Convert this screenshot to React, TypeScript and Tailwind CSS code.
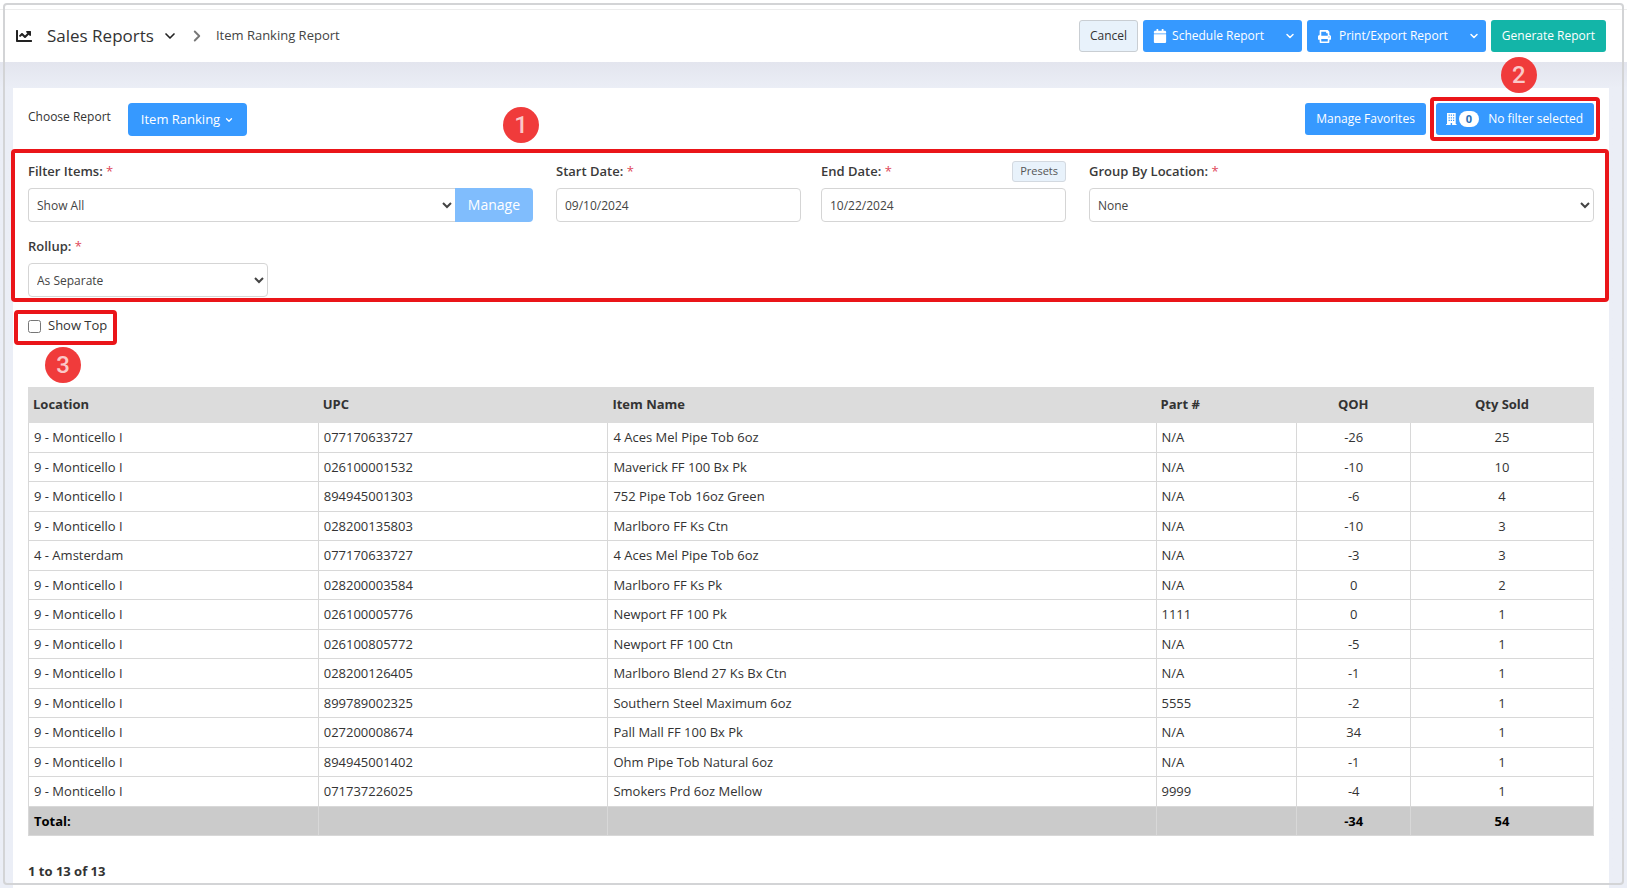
import type { ReactNode } from "react";
import { FaCalendar, FaChartLine, FaPrint } from "react-icons/fa";
import { LuChevronDown, LuChevronRight } from "react-icons/lu";

type Row = [string, string, string, string, string, string];

const rows: Row[] = [
  ["9 - Monticello I", "077170633727", "4 Aces Mel Pipe Tob 6oz", "N/A", "-26", "25"],
  ["9 - Monticello I", "026100001532", "Maverick FF 100 Bx Pk", "N/A", "-10", "10"],
  ["9 - Monticello I", "894945001303", "752 Pipe Tob 16oz Green", "N/A", "-6", "4"],
  ["9 - Monticello I", "028200135803", "Marlboro FF Ks Ctn", "N/A", "-10", "3"],
  ["4 - Amsterdam", "077170633727", "4 Aces Mel Pipe Tob 6oz", "N/A", "-3", "3"],
  ["9 - Monticello I", "028200003584", "Marlboro FF Ks Pk", "N/A", "0", "2"],
  ["9 - Monticello I", "026100005776", "Newport FF 100 Pk", "1111", "0", "1"],
  ["9 - Monticello I", "026100805772", "Newport FF 100 Ctn", "N/A", "-5", "1"],
  ["9 - Monticello I", "028200126405", "Marlboro Blend 27 Ks Bx Ctn", "N/A", "-1", "1"],
  ["9 - Monticello I", "899789002325", "Southern Steel Maximum 6oz", "5555", "-2", "1"],
  ["9 - Monticello I", "027200008674", "Pall Mall FF 100 Bx Pk", "N/A", "34", "1"],
  ["9 - Monticello I", "894945001402", "Ohm Pipe Tob Natural 6oz", "N/A", "-1", "1"],
  ["9 - Monticello I", "071737226025", "Smokers Prd 6oz Mellow", "9999", "-4", "1"],
];

const headings = ["Location", "UPC", "Item Name", "Part #", "QOH", "Qty Sold"];
const control = "h-[34px] w-full rounded border border-[#d5d5d5] bg-white text-[12px] text-[#444]";
const blue = "bg-[#3699ff] text-white";

function Marker({ n, className }: { n: number; className: string }) {
  return (
    <span
      className={`absolute z-10 flex size-9 items-center justify-center rounded-full bg-[#f03b3b] font-['Roboto',sans-serif] text-2xl font-medium text-[#fbc8c8] ${className}`}
    >
      {n}
    </span>
  );
}

function Outline({ className }: { className: string }) {
  return (
    <span
      className={`pointer-events-none absolute rounded-[4px] border-4 border-[#ea1519] ${className}`}
    />
  );
}

function Label({ htmlFor, children }: { htmlFor: string; children: ReactNode }) {
  return (
    <label htmlFor={htmlFor} className="text-[13px] leading-5 font-semibold text-[#3a3a3a]">
      {children} <span className="font-normal text-[#e0485a]">*</span>
    </label>
  );
}

function SplitButton({ icon, children }: { icon: ReactNode; children: string }) {
  return (
    <div className="flex">
      <button className={`flex h-8 items-center rounded-l-[3px] px-[10px] ${blue}`}>
        {icon}
        {children}
      </button>
      <button
        aria-label={`${children} options`}
        className={`flex h-8 items-center rounded-r-[3px] pr-[6px] pl-[10px] ${blue}`}
      >
        <LuChevronDown className="size-3" strokeWidth={3} />
      </button>
    </div>
  );
}

export default function App() {
  return (
    <div className="relative flex min-h-screen flex-col bg-[#ebedf5] font-['Open_Sans',sans-serif] text-[13px] text-[#333]">
      <div className="pointer-events-none absolute inset-x-[3px] top-[3px] bottom-[3px] z-20 rounded border-2 border-[#d3d4d6]" />

      <div className="h-[9px] bg-white" />
      <header className="flex h-[53px] items-center justify-between border-t border-[#ededed] bg-white pr-[21px] pl-4">
        <div className="flex items-center">
          <FaChartLine className="size-4 text-[#222]" />
          <button className="ml-[15px] flex items-center gap-2 text-[17px] text-[#333]">
            Sales Reports
            <LuChevronDown className="size-4 text-[#222]" strokeWidth={2.5} />
          </button>
          <LuChevronRight className="ml-[10px] size-[18px] text-[#777]" strokeWidth={2.5} />
          <a href="#item-ranking" className="ml-[10px] text-[13px] text-[#444]">
            Item Ranking Report
          </a>
        </div>
        <div className="flex items-center gap-[5px] text-[12px]">
          <button className="h-8 rounded-[3px] border border-[#c9ced3] bg-[#e8f2fb] px-[10px] text-[#333]">
            Cancel
          </button>
          <SplitButton icon={<FaCalendar className="mr-[5px] size-[14px]" />}>Schedule Report</SplitButton>
          <SplitButton icon={<FaPrint className="mr-2 ml-px size-[13px]" />}>Print/Export Report</SplitButton>
          <button className="h-8 rounded-[3px] bg-[#13b5a8] px-[11px] text-white">
            Generate Report
          </button>
        </div>
      </header>

      <div className="flex grow flex-col bg-linear-to-b from-[#e3e5ee] to-[#ebeef6] to-[26px] pt-[26px] pr-[18px] pl-[13px]">
        <main className="grow bg-white px-[15px] pt-[15px]">
          <div className="relative flex items-start justify-between">
            <div className="flex items-start">
              <span className="pt-1 text-[12px] leading-5">Choose Report</span>
              <button className={`ml-[17px] flex h-[33px] items-center gap-1 rounded px-[13px] text-[13px] ${blue}`}>
                Item Ranking
                <LuChevronDown className="size-[10px]" strokeWidth={3} />
              </button>
            </div>
            <div className="flex gap-[10px] text-[12px]">
              <button className={`h-8 rounded-[3px] px-[11px] ${blue}`}>Manage Favorites</button>
              <div className="relative">
                <button className={`flex h-8 items-center rounded-[3px] pr-[11px] pl-[10px] ${blue}`}>
                  <svg viewBox="0 0 11 12" className="h-3 w-[11px]" fill="currentColor" aria-hidden="true">
                    <path
                      fillRule="evenodd"
                      d="M1 0h8.7v11h.8v1H6.1v-2H4.7v2H.2v-1H1zM2.6 1.6v1.2h1.2V1.6zm2.2 0v1.2H6V1.6zm2.2 0v1.2h1.2V1.6zM2.6 4.2v1.2h1.2V4.2zm2.2 0v1.2H6V4.2zm2.2 0v1.2h1.2V4.2zM2.6 6.8V8h1.2V6.8zm2.2 0V8H6V6.8zm2.2 0V8h1.2V6.8z"
                    />
                  </svg>
                  <span className="mr-[9px] ml-[2px] rounded-full bg-white px-[7px] text-[11px] leading-4 font-bold text-[#2a6fb8]">
                    0
                  </span>
                  No filter selected
                </button>
                <Outline className="-inset-[6px]" />
                <Marker n={2} className="-top-[46px] left-[65px]" />
              </div>
            </div>
            <Marker n={1} className="top-1 left-[475px]" />
          </div>

          <section className="relative mt-[13px] -mr-[15px] -ml-[17px] pt-3 pr-[15px] pb-[5px] pl-[17px]">
            <Outline className="inset-0" />
            <div className="grid grid-cols-[505fr_510fr_505fr] gap-x-[23px]">
              <div>
                <div className="flex h-[27px] items-start">
                  <Label htmlFor="items">Filter Items:</Label>
                </div>
                <div className="flex">
                  <select id="items" className={`${control} rounded-r-none border-r-0 px-1`}>
                    <option>Show All</option>
                  </select>
                  <button disabled className="rounded-r bg-[#80bdfd] px-[13px] text-sm font-medium text-white">
                    Manage
                  </button>
                </div>
              </div>
              <div className="grid grid-cols-2 gap-x-5">
                <div>
                  <div className="flex h-[27px] items-start">
                    <Label htmlFor="start">Start Date:</Label>
                  </div>
                  <input id="start" defaultValue="09/10/2024" className={`${control} px-2`} />
                </div>
                <div>
                  <div className="flex h-[27px] items-start justify-between">
                    <Label htmlFor="end">End Date:</Label>
                    <button className="h-[21px] rounded-[3px] border border-[#d3d9e0] bg-[#e8f2fb] px-[7px] text-[11px] text-[#555]">
                      Presets
                    </button>
                  </div>
                  <input id="end" defaultValue="10/22/2024" className={`${control} px-2`} />
                </div>
              </div>
              <div>
                <div className="flex h-[27px] items-start">
                  <Label htmlFor="group">Group By Location:</Label>
                </div>
                <select id="group" className={`${control} px-1`}>
                  <option>None</option>
                </select>
              </div>
            </div>
            <div className="mt-[14px] w-60">
              <div className="flex h-[27px] items-start">
                <Label htmlFor="rollup">Rollup:</Label>
              </div>
              <select id="rollup" className={`${control} px-1`}>
                <option>As Separate</option>
              </select>
            </div>
          </section>

          <div className="relative mt-[14px] flex h-5 w-fit items-center gap-[7px]">
            <input id="top" type="checkbox" className="size-[13px]" />
            <label htmlFor="top">Show Top</label>
            <Outline className="-top-[6px] -right-[10px] -bottom-[9px] -left-[14px]" />
            <Marker n={3} className="top-[31px] left-[17px]" />
          </div>

          <table className="mt-[51px] w-full table-fixed border-separate border-spacing-0 leading-normal">
            <colgroup>
              <col className="w-[18.5%]" />
              <col className="w-[18.5%]" />
              <col className="w-[35%]" />
              <col className="w-[9%]" />
              <col className="w-[7.25%]" />
              <col className="w-[11.75%]" />
            </colgroup>
            <thead className="bg-[#dcdcdc]">
              <tr className="h-9">
                {headings.map((h, i) => (
                  <th key={h} className={`px-[5px] font-bold ${i > 3 ? "text-center" : "text-left"}`}>
                    {h}
                  </th>
                ))}
              </tr>
            </thead>
            <tbody>
              {rows.map((row, r) => (
                <tr key={r}>
                  {row.map((cell, i) => (
                    <td
                      key={i}
                      className={`border-b border-l border-[#d8d8d8] px-[5px] pt-[5px] pb-1 last:border-r ${i > 3 ? "text-center" : ""}`}
                    >
                      {cell}
                    </td>
                  ))}
                </tr>
              ))}
            </tbody>
            <tfoot className="bg-[#cbcbcb] font-bold text-black">
              <tr>
                {["Total:", "", "", "", "-34", "54"].map((cell, i) => (
                  <td
                    key={i}
                    className={`border-b border-l border-[#d8d8d8] px-[5px] pt-[5px] pb-1 last:border-r ${i > 3 ? "text-center" : ""}`}
                  >
                    {cell}
                  </td>
                ))}
              </tr>
            </tfoot>
          </table>

          <p className="mt-[25px] leading-5 font-bold">1 to 13 of 13</p>
        </main>
      </div>
    </div>
  );
}
